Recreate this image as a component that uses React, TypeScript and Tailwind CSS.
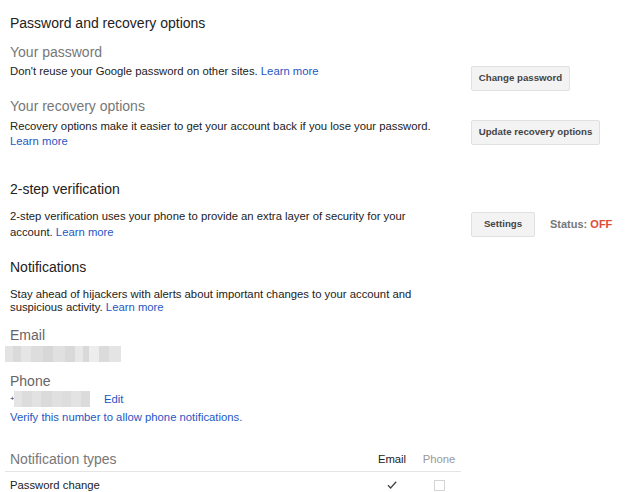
import React from "react";

const Btn = ({ children, className = "" }: { children: React.ReactNode; className?: string }) => (
  <div
    className={`h-[25px] flex items-center justify-center bg-[#f3f3f3] border border-[#e0e0e0] rounded-[2px] text-[9.7px] font-bold text-[#444] whitespace-nowrap ${className}`}
  >
    {children}
  </div>
);

const Link = ({ children }: { children: React.ReactNode }) => (
  <span className="text-[#1f57c3]">{children}</span>
);

const emailBlur: [number, string][] = [
  [8, "#e3e3e3"],
  [8, "#dadada"],
  [10, "#e5e5e5"],
  [12, "#dddddd"],
  [10, "#d7d7d7"],
  [12, "#e0e0e0"],
  [10, "#d9d9d9"],
  [8, "#e7e7e7"],
  [6, "#d9d9d9"],
  [10, "#ededed"],
  [10, "#dbdbdb"],
  [12, "#e4e4e4"],
];

const phoneBlur: [number, string][] = [
  [8, "#e4e4e4"],
  [10, "#dcdcdc"],
  [9, "#e2e2e2"],
  [11, "#dadada"],
  [10, "#e0e0e0"],
  [9, "#dddddd"],
  [10, "#e3e3e3"],
  [9, "#dbdbdb"],
];

export default function App() {
  return (
    <div className="w-[638px] h-[492px] overflow-hidden bg-white pl-[10px] font-['Liberation_Sans',Arial,sans-serif] text-[#222]">
      <div className="pt-[14px] text-[14px] leading-[18px] text-[#222]">Password and recovery options</div>

      <div className="flex items-start mt-[11px]">
        <div className="w-[440px]">
          <div className="text-[14px] leading-[18px] text-[#777]">Your password</div>
          <div className="mt-[3px] text-[11.3px] leading-[14px]">
            Don't reuse your Google password on other sites. <Link>Learn more</Link>
          </div>
        </div>
        <div className="ml-[21px] pt-[23px]">
          <Btn className="w-[99px]">Change password</Btn>
        </div>
      </div>

      <div className="flex items-start mt-[6px]">
        <div className="w-[440px]">
          <div className="text-[14px] leading-[18px] text-[#777]">Your recovery options</div>
          <div className="mt-[4px] text-[11.3px] leading-[15px]">
            Recovery options make it easier to get your account back if you lose your password.{" "}
            <Link>Learn more</Link>
          </div>
        </div>
        <div className="ml-[21px] pt-[23px]">
          <Btn className="w-[129px]">Update recovery options</Btn>
        </div>
      </div>

      <div className="mt-[31px] text-[14px] leading-[18px] text-[#222]">2-step verification</div>
      <div className="flex items-start mt-[10px]">
        <div className="w-[440px] text-[11.3px] leading-[16px]">
          2-step verification uses your phone to provide an extra layer of security for your account.{" "}
          <Link>Learn more</Link>
        </div>
        <div className="ml-[21px] pt-[4px] flex items-center">
          <Btn className="w-[64px]">Settings</Btn>
          <div className="ml-[15px] text-[11px] font-bold text-[#777]">
            Status: <span className="text-[#dd4b39]">OFF</span>
          </div>
        </div>
      </div>

      <div className="mt-[18px] text-[14px] leading-[18px] text-[#222]">Notifications</div>
      <div className="mt-[12px] w-[440px] text-[11.3px] leading-[13px]">
        Stay ahead of hijackers with alerts about important changes to your account and suspicious activity.{" "}
        <Link>Learn more</Link>
      </div>

      <div className="mt-[12px] text-[14px] leading-[18px] text-[#666]">Email</div>
      <div className="mt-[2px] -ml-[5px] flex h-[16px]">
        {emailBlur.map(([w, c], i) => (
          <div key={i} className="h-full" style={{ width: w, background: c }} />
        ))}
      </div>

      <div className="mt-[10px] text-[14px] leading-[18px] text-[#666]">Phone</div>
      <div className="mt-[1px] flex items-center h-[16px]">
        <span className="text-[8px] leading-[8px] text-[#333] w-[4px]">+</span>
        <div className="flex h-full">
          {phoneBlur.map(([w, c], i) => (
            <div key={i} className="h-full" style={{ width: w, background: c }} />
          ))}
        </div>
        <span className="ml-[14px] text-[11.3px] text-[#1f57c3]">Edit</span>
      </div>
      <div className="mt-[3px] text-[11.3px] leading-[14px] text-[#1f57c3]">
        Verify this number to allow phone notifications.
      </div>

      <div className="mt-[26px] -ml-[5px] w-[456px]">
        <div className="flex items-end pb-[3px] border-b border-[#e5e5e5]">
          <div className="flex-1 pl-[5px] text-[14px] leading-[18px] text-[#777]">Notification types</div>
          <div className="w-[50px] text-center text-[11.3px] leading-[18px] text-[#222]">Email</div>
          <div className="w-[44px] text-center text-[11.3px] leading-[18px] text-[#999]">Phone</div>
        </div>
        <div className="flex items-center h-[26px]">
          <div className="flex-1 pl-[5px] text-[11.3px] text-[#222]">Password change</div>
          <div className="w-[50px] flex justify-center">
            <svg width="10" height="8" viewBox="0 0 10 8">
              <path d="M1 4.2 L3.6 7 L9.2 0.8" fill="none" stroke="#444" strokeWidth="1.3" />
            </svg>
          </div>
          <div className="w-[44px] flex justify-center">
            <div className="w-[11px] h-[11px] border border-[#d4d4d4] bg-white" />
          </div>
        </div>
      </div>
    </div>
  );
}
